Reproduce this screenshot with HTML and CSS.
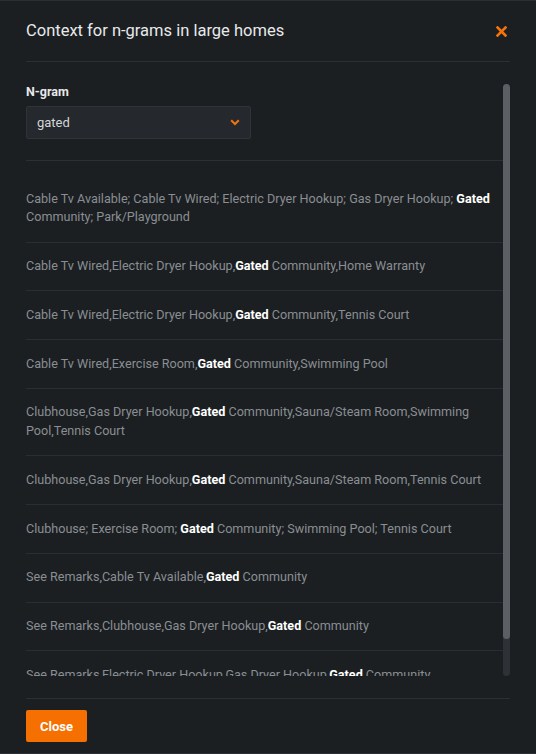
FILE: index.html
```html
<!DOCTYPE html>
<html lang="en">
<head>
<meta charset="utf-8">
<title>Context for n-grams in large homes</title>
<link rel="stylesheet" href="styles.css">
</head>
<body>
<div class="modal">
  <header class="modal-header">
    <h1 class="modal-title">Context for n-grams in large homes</h1>
    <button class="icon-close" aria-label="Close">
      <svg width="11" height="11" viewBox="0 0 11 11"><path d="M1.5 1.5 L9.5 9.5 M9.5 1.5 L1.5 9.5" stroke="#f5730b" stroke-width="2.6" stroke-linecap="square"/></svg>
    </button>
  </header>
  <div class="modal-body">
    <main class="scroll-area">
      <section class="filter">
        <label class="filter-label">N-gram</label>
        <div class="select">
          <span class="select-value">gated</span>
          <svg class="chevron" width="10" height="7" viewBox="0 0 10 7"><path d="M1.2 1.3 L5 5 L8.8 1.3" fill="none" stroke="#f5730b" stroke-width="2"/></svg>
        </div>
      </section>
      <ul class="context-list">
        <li class="context-row">Cable Tv Available; Cable Tv Wired; Electric Dryer Hookup; Gas Dryer Hookup; <b>Gated</b> Community; Park/Playground</li>
        <li class="context-row">Cable Tv Wired,Electric Dryer Hookup,<b>Gated</b> Community,Home Warranty</li>
        <li class="context-row">Cable Tv Wired,Electric Dryer Hookup,<b>Gated</b> Community,Tennis Court</li>
        <li class="context-row">Cable Tv Wired,Exercise Room,<b>Gated</b> Community,Swimming Pool</li>
        <li class="context-row">Clubhouse,Gas Dryer Hookup,<b>Gated</b> Community,Sauna/Steam Room,Swimming Pool,Tennis Court</li>
        <li class="context-row">Clubhouse,Gas Dryer Hookup,<b>Gated</b> Community,Sauna/Steam Room,Tennis Court</li>
        <li class="context-row">Clubhouse; Exercise Room; <b>Gated</b> Community; Swimming Pool; Tennis Court</li>
        <li class="context-row">See Remarks,Cable Tv Available,<b>Gated</b> Community</li>
        <li class="context-row">See Remarks,Clubhouse,Gas Dryer Hookup,<b>Gated</b> Community</li>
        <li class="context-row">See Remarks,Electric Dryer Hookup,Gas Dryer Hookup,<b>Gated</b> Community</li>
      </ul>
    </main>
    <div class="scrollbar"><div class="scrollbar-thumb"></div></div>
  </div>
  <footer class="modal-footer">
    <button class="btn-primary">Close</button>
  </footer>
</div>
</body>
</html>
```
FILE: styles.css
```css
* { box-sizing: border-box; }
html, body { margin: 0; padding: 0; }
body {
  background: #1b1f22;
  font-family: Roboto, "Liberation Sans", Arial, sans-serif;
  width: 536px;
  height: 754px;
  overflow: hidden;
}
.modal {
  height: 754px;
  display: flex;
  flex-direction: column;
  padding: 0 26px;
  border-top: 1px solid #2b2f33;
  border-bottom: 1px solid #2b2f33;
}
.modal-header {
  display: flex;
  align-items: center;
  justify-content: space-between;
  padding: 20px 0;
  border-bottom: 1px solid #2c3034;
}
.modal-title {
  margin: 0;
  font-size: 16.5px;
  line-height: 20px;
  font-weight: 400;
  color: #e8e9ea;
}
.icon-close {
  background: none;
  border: 0;
  padding: 0;
  margin-right: 3px;
  width: 11px;
  height: 11px;
  display: flex;
  cursor: pointer;
}
.modal-body {
  position: relative;
  margin-top: 22px;
  height: 592px;
  flex: none;
  display: flex;
}
.scroll-area {
  flex: 1;
  min-width: 0;
  margin-right: 7px;
  overflow: hidden;
}
.scrollbar {
  position: absolute;
  top: 0;
  right: 0;
  bottom: 0;
  width: 7px;
  background: #2e3236;
  border-radius: 4px;
}
.scrollbar-thumb {
  height: 555px;
  background: #5c5f63;
  border-radius: 4px;
}
.filter {
  padding-bottom: 21px;
  border-bottom: 1px solid #2c3034;
}
.filter-label {
  display: block;
  font-size: 12.5px;
  line-height: 16px;
  font-weight: 700;
  color: #e8e9ea;
}
.select {
  margin-top: 6px;
  width: 225px;
  height: 33px;
  background: #25292d;
  border: 1px solid #30343a;
  border-radius: 2px;
  display: flex;
  align-items: center;
  justify-content: space-between;
  padding: 0 10px 0 10px;
}
.select-value {
  font-size: 13px;
  color: #d4d6d8;
}
.chevron { display: block; }
.context-list {
  list-style: none;
  margin: 0;
  padding: 14px 0 16px;
}
.context-row {
  padding: 14.5px 0;
  border-bottom: 1px solid #2a2e32;
  font-size: 12.6px;
  line-height: 18.75px;
  color: #8a8e92;
}
.context-row:last-child { border-bottom: 0; }
.context-row b {
  color: #ffffff;
  font-weight: 700;
}
.modal-footer {
  margin-top: 22px;
  border-top: 1px solid #2c3034;
  padding: 11px 0;
}
.btn-primary {
  display: block;
  width: 61px;
  height: 32px;
  border: 0;
  border-radius: 2px;
  background: #f57000;
  color: #ffffff;
  font-family: Roboto, "Liberation Sans", Arial, sans-serif;
  font-size: 13px;
  font-weight: 700;
  padding: 0;
}
```
